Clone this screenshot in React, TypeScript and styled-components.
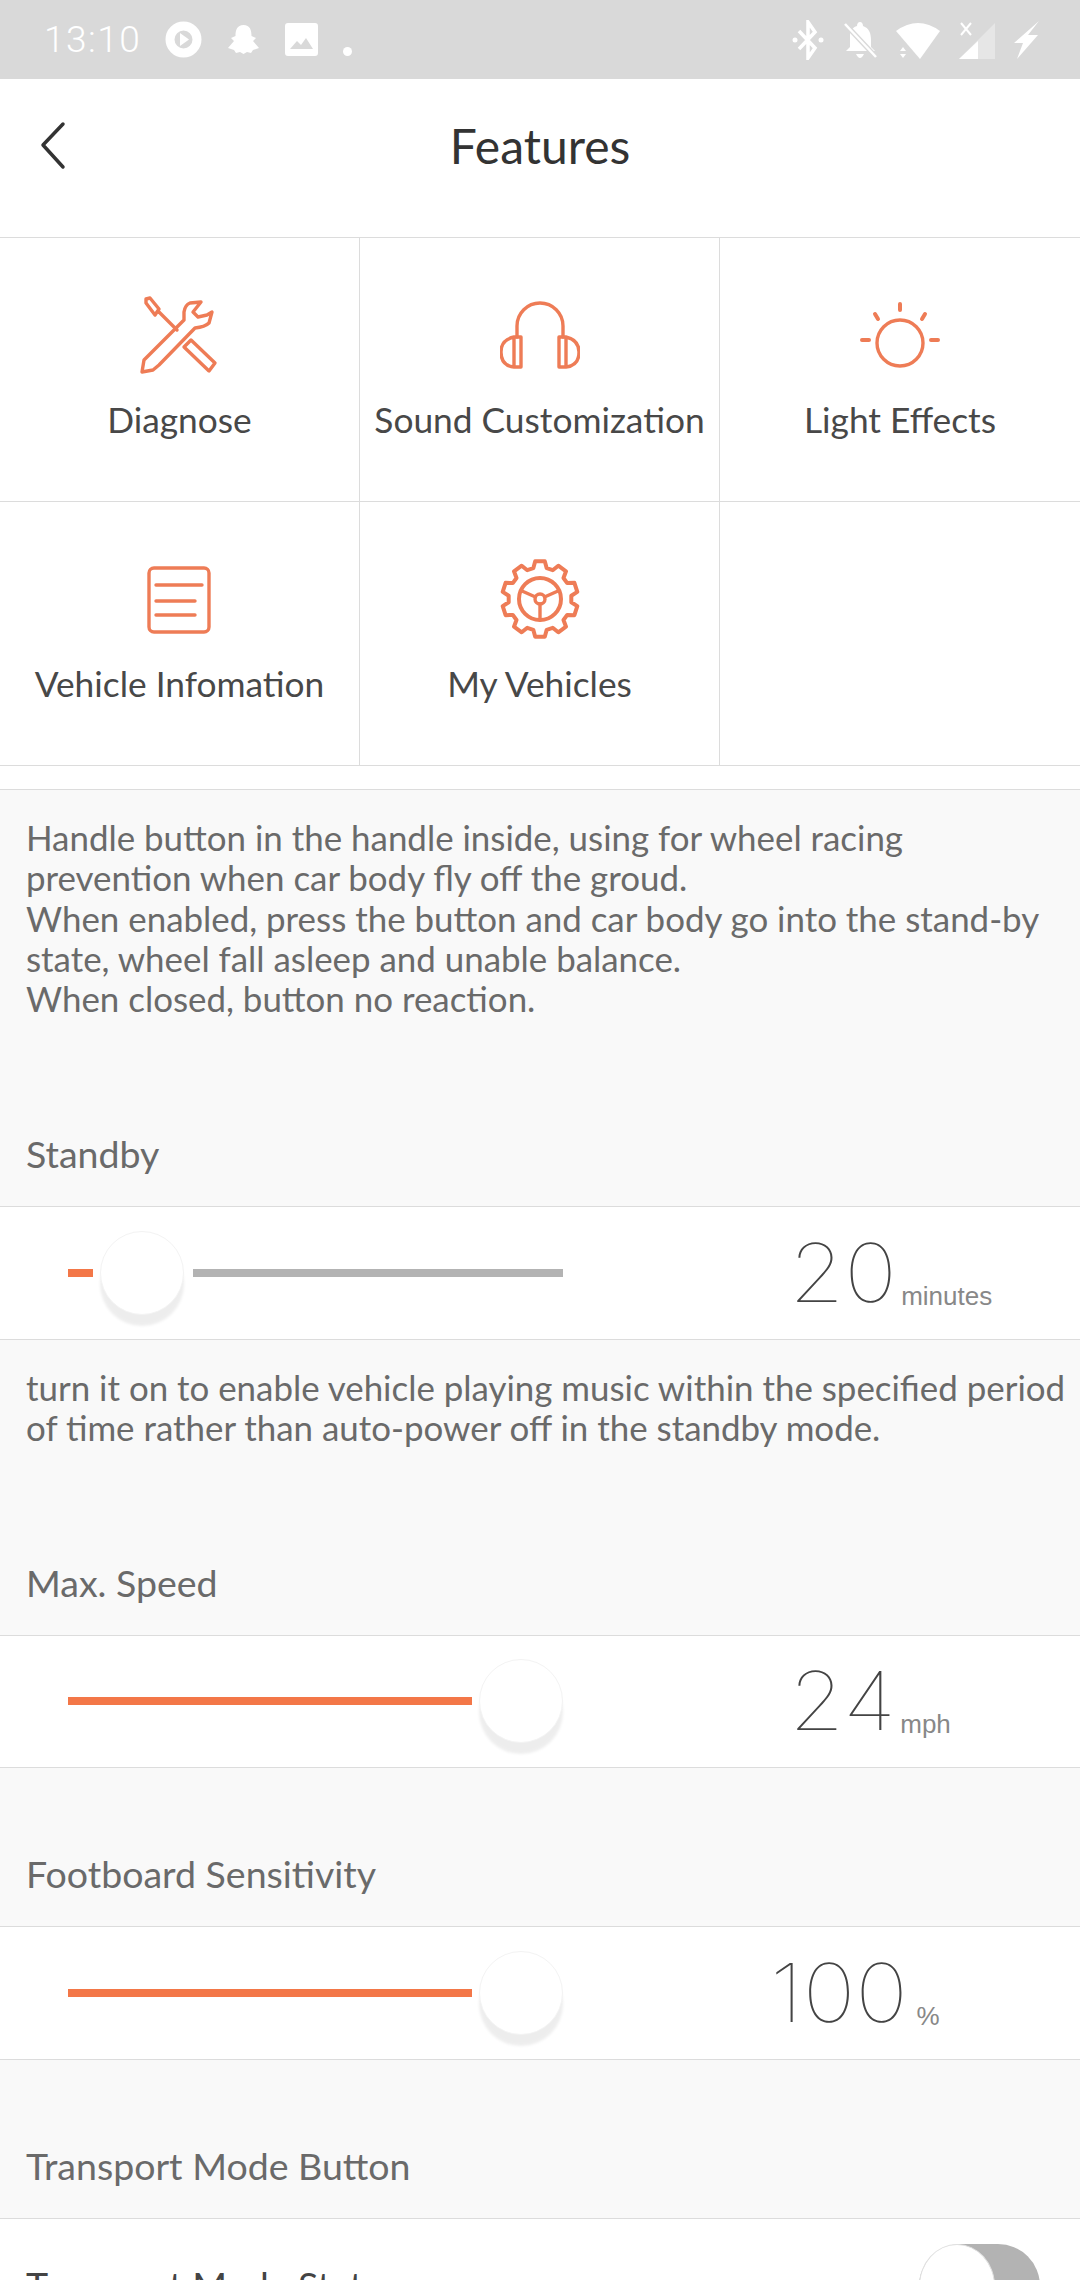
import React from 'react';
import styled, { createGlobalStyle } from 'styled-components';

const GlobalStyle = createGlobalStyle`
  html, body {
    margin: 0;
    padding: 0;
    height: 2280px;
    overflow: hidden;
    background: #f8f8f8;
  }
`;

const Page = styled.div`
  width: 1080px;
  height: 2280px;
  overflow: hidden;
  font-family: Lato, "Open Sans", sans-serif;
  background: #f9f9f9;
`;

const StatusBar = styled.div`
  height: 79px;
  background: #d9d9d9;
  display: flex;
  align-items: center;
  padding: 0 41px 0 44px;
  box-sizing: border-box;
  color: #fff;
`;

const Clock = styled.span`
  font-family: Roboto, sans-serif;
  font-size: 37px;
  font-weight: 300;
  width: 121px;
  letter-spacing: 1.5px;
`;

const StatusGroup = styled.div<{ $gap: number }>`
  display: flex;
  align-items: center;
  gap: ${(p) => p.$gap}px;
`;

const Spacer = styled.div`
  flex: 1;
`;

const Header = styled.div`
  height: 158px;
  background: #fff;
  display: flex;
  align-items: center;
  justify-content: center;
  position: relative;
  padding-bottom: 26px;
  box-sizing: border-box;
`;

const BackIcon = styled.svg`
  position: absolute;
  left: 38px;
  top: 42px;
`;

const Title = styled.h1`
  margin: 0;
  font-size: 48px;
  font-weight: 400;
  color: #333;
`;

const Grid = styled.div`
  display: grid;
  grid-template-columns: repeat(3, 360px);
  grid-auto-rows: 264px;
  background: #fff;
  border-top: 1px solid #dcdcdc;
`;

const Cell = styled.div`
  box-sizing: border-box;
  border-right: 1px solid #dcdcdc;
  border-bottom: 1px solid #dcdcdc;
  display: flex;
  flex-direction: column;
  align-items: center;
  padding-top: 57px;
  &:nth-child(3n) {
    border-right: none;
  }
`;

const CellLabel = styled.span`
  margin-top: 25px;
  font-size: 35.3px;
  line-height: 40px;
  color: #484848;
  white-space: nowrap;
`;

const Gap = styled.div`
  height: 23px;
  background: #fff;
  border-bottom: 1px solid #dcdcdc;
`;

const Section = styled.div<{ $height: number }>`
  height: ${(p) => p.$height}px;
  box-sizing: border-box;
  padding: 28px 10px 0 26px;
  display: flex;
  flex-direction: column;
  justify-content: space-between;
`;

const Description = styled.p`
  margin: 0;
  font-size: 34.9px;
  line-height: 40.3px;
  color: #6a6a6a;
  white-space: pre-line;
`;

const SectionLabel = styled.div`
  font-size: 37.5px;
  line-height: 44px;
  color: #6a6a6a;
  padding-bottom: 30px;
`;

const Row = styled.div`
  height: 133.5px;
  box-sizing: border-box;
  background: #fff;
  border-top: 1px solid #dcdcdc;
  border-bottom: 1px solid #dcdcdc;
  display: flex;
  align-items: center;
  padding-left: 68px;
`;

const Slider = styled.div`
  width: 495px;
  display: flex;
  align-items: center;
  gap: 7px;
`;

const Fill = styled.div<{ $width: number }>`
  width: ${(p) => p.$width}px;
  height: 8px;
  flex-shrink: 0;
  background: #f37748;
`;

const Rest = styled.div`
  flex: 1;
  height: 8px;
  background: #b3b3b3;
`;

const Thumb = styled.div`
  width: 84px;
  height: 84px;
  flex-shrink: 0;
  box-sizing: border-box;
  border-radius: 50%;
  background: #fff;
  border: 1px solid #f3f3f3;
  box-shadow: 0 11px 3px rgba(0, 0, 0, 0.07);
  margin-right: 2px;
`;

const Value = styled.div<{ $left: number }>`
  margin-left: ${(p) => p.$left}px;
  display: flex;
  align-items: baseline;
  color: #444;
`;

const Number = styled.span`
  display: inline-block;
  font-family: Inter, sans-serif;
  font-size: 81px;
  font-weight: 100;
  transform: scaleX(1.1);
  transform-origin: left center;
`;

const Unit = styled.span<{ $gap: number }>`
  font-family: "Liberation Sans", sans-serif;
  font-size: 26px;
  color: #888;
  margin-left: ${(p) => p.$gap}px;
  transform: translateY(3px);
`;

const SwitchRow = styled(Row)`
  justify-content: space-between;
  border-bottom: none;
  padding: 0 40px 0 26px;
`;

const SwitchLabel = styled.span`
  font-size: 37.5px;
  color: #444;
`;

const Toggle = styled.div`
  width: 121px;
  height: 84px;
  border-radius: 42px;
  background: #b3b3b3;
  margin-top: 3px;
`;

const ToggleKnob = styled.div`
  width: 76px;
  height: 84px;
  box-sizing: border-box;
  border-radius: 50%;
  background: #fff;
  border: 1px solid #e0e0e0;
`;

const Stroke = styled.svg.attrs({ fill: 'none', stroke: '#ee7c56', strokeLinecap: 'round', strokeLinejoin: 'round' })`
  display: block;
  flex-shrink: 0;
  stroke-width: 3.4;
`;

function gearPath(cx: number, cy: number, teeth: number, outer: number, inner: number) {
  const pts: string[] = [];
  const step = (Math.PI * 2) / teeth;
  for (let i = 0; i < teeth; i++) {
    const a = -Math.PI / 2 + i * step;
    const offs: [number, number][] = [
      [-0.34, inner],
      [-0.2, outer],
      [0.2, outer],
      [0.34, inner],
    ];
    offs.forEach(([o, r]) => {
      const x = cx + Math.cos(a + o * step) * r;
      const y = cy + Math.sin(a + o * step) * r;
      pts.push(`${x.toFixed(1)} ${y.toFixed(1)}`);
    });
  }
  return 'M' + pts.join(' L') + ' Z';
}

const DiagnoseIcon = () => (
  <Stroke width="80" height="80" viewBox="0 0 80 80">
    <path d="M44 25 L44 17 Q45 10 50 8 L61 7 L53 17 L58 22 L67 20 L72 17 L69 28 Q65 32 55 33 L19 70 L13 75 L2 77 L4 65 Z" />
    <path d="M6 4 L10 3 L19 14 L15 20 L6 8 Z" />
    <path d="M19 17 L37 35" />
    <path d="M44 52 L51 45 L75 68 L69 76 Z" />
  </Stroke>
);

const HeadphonesIcon = () => (
  <Stroke width="80" height="80" viewBox="0 0 80 80">
    <path d="M17 42 V31 A23 23 0 0 1 63 31 V42" />
    <path d="M21 42 H14 C5 44 1 50 1 57 C1 65 5 71 14 72 H21 Z M14 42 V72" />
    <path d="M59 42 H66 C75 44 79 50 79 57 C79 65 75 71 66 72 H59 Z M66 42 V72" />
  </Stroke>
);

const LightIcon = () => (
  <Stroke width="80" height="80" viewBox="0 0 80 80">
    <circle cx="40" cy="48" r="23" />
    <path d="M40 9 V15 M15 19 L18 24 M65 19 L62 24 M2 45 H9 M71 45 H78" strokeWidth="4" />
  </Stroke>
);

const InfoIcon = () => (
  <Stroke width="80" height="80" viewBox="0 0 80 80">
    <rect x="9" y="9" width="60" height="64" rx="5" />
    <path d="M16 26 H62 M16 42 H55 M16 56 H55" />
  </Stroke>
);

const GearIcon = () => (
  <Stroke width="80" height="80" viewBox="0 0 80 80" strokeWidth="4">
    <path d={gearPath(40, 40, 10, 38, 31.5)} style={{ strokeWidth: 4 }} />
    <circle cx="40" cy="40" r="21" style={{ strokeWidth: 4 }} />
    <circle cx="40" cy="40" r="5" />
    <path d="M40 45 V61 M35.5 38 L22 32 M44.5 38 L58 32" />
  </Stroke>
);

const StatusLeftIcons = () => (
  <StatusGroup $gap={25}>
    <svg width="37" height="37" viewBox="0 0 37 37">
      <circle cx="18.5" cy="18.5" r="13.5" fill="none" stroke="#fff" strokeWidth="9" />
      <path d="M15 12 L24 18.5 L15 25 Z" fill="#fff" />
    </svg>
    <svg width="33" height="31" viewBox="0 0 33 31">
      <path d="M16.5 1 C10 1 8.5 6 8.5 12 L4 14 L7 17 L1 24 L7 26 L9 29 L13 28 L16.5 30 L20 28 L24 29 L26 26 L32 24 L26 17 L29 14 L24.5 12 C24.5 6 23 1 16.5 1 Z" fill="#fff" />
    </svg>
    <svg width="33" height="33" viewBox="0 0 33 33">
      <path fillRule="evenodd" d="M3 0 H30 Q33 0 33 3 V30 Q33 33 30 33 H3 Q0 33 0 30 V3 Q0 0 3 0 Z M5 26 H28 L21 15 L16 22 L12 18 Z" fill="#fff" />
    </svg>
    <svg width="9" height="9" viewBox="0 0 9 9" style={{ marginTop: 24 }}>
      <circle cx="4.5" cy="4.5" r="4.5" fill="#fff" />
    </svg>
  </StatusGroup>
);

const StatusRightIcons = () => (
  <StatusGroup $gap={17}>
    <svg width="34" height="40" viewBox="0 0 34 40">
      <path d="M8 11 L24 28 L17 38 V2 L24 12 L8 29" fill="none" stroke="#fff" strokeWidth="3.5" />
      <circle cx="4" cy="20" r="2.5" fill="#fff" />
      <circle cx="30" cy="20" r="2.5" fill="#fff" />
    </svg>
    <svg width="36" height="38" viewBox="0 0 36 38">
      <path d="M18 1 C20 1 21 3 21 5 C27 7 29 12 29 19 V26 L33 30 H4 L8 26 V14 C8 10 11 6 15 5 C15 3 16 1 18 1 Z M14 33 H22 Q20 37 18 37 Q16 37 14 33 Z" fill="#fff" />
      <path d="M3 3 L34 36" stroke="#d9d9d9" strokeWidth="5" />
      <path d="M3 3 L34 36" stroke="#fff" strokeWidth="2.5" />
    </svg>
    <svg width="46" height="38" viewBox="0 0 46 38">
      <path d="M1 10 Q23 -6 45 10 L25 38 Z" fill="#fff" />
      <path d="M8 26 L11 30 H5 Z M8 37 L11 33 H5 Z" fill="#fff" />
    </svg>
    <svg width="38" height="38" viewBox="0 0 38 38">
      <path d="M37 2 V38 H1 Z" fill="#fff" opacity="0.35" />
      <path d="M20 20 V38 H1 Z" fill="#fff" />
      <path d="M3 2 L13 14 M13 2 L3 14" stroke="#fff" strokeWidth="2" />
    </svg>
    <svg width="26" height="38" viewBox="0 0 26 38">
      <path d="M26 0 L1 22 H10 L4 38 L25 14 H15 Z" fill="#fff" />
    </svg>
  </StatusGroup>
);

const features = [
  { label: 'Diagnose', icon: <DiagnoseIcon /> },
  { label: 'Sound Customization', icon: <HeadphonesIcon /> },
  { label: 'Light Effects', icon: <LightIcon /> },
  { label: 'Vehicle Infomation', icon: <InfoIcon /> },
  { label: 'My Vehicles', icon: <GearIcon /> },
];

interface SliderRowProps {
  fill: number;
  value: string;
  unit: string;
  left: number;
  unitGap: number;
}

const SliderRow: React.FC<SliderRowProps> = ({ fill, value, unit, left, unitGap }) => (
  <Row>
    <Slider>
      <Fill $width={fill} />
      <Thumb />
      {fill < 100 && <Rest />}
    </Slider>
    <Value $left={left}>
      <Number>{value}</Number>
      <Unit $gap={unitGap}>{unit}</Unit>
    </Value>
  </Row>
);

const App: React.FC = () => (
  <Page>
    <GlobalStyle />
    <StatusBar>
      <Clock>13:10</Clock>
      <StatusLeftIcons />
      <Spacer />
      <StatusRightIcons />
    </StatusBar>
    <Header>
      <BackIcon width="30" height="50" viewBox="0 0 30 50" fill="none" stroke="#333" strokeWidth="3.5" strokeLinecap="round" strokeLinejoin="round">
        <path d="M25 3 L5 24 L25 46" />
      </BackIcon>
      <Title>Features</Title>
    </Header>
    <Grid>
      {features.map((f) => (
        <Cell key={f.label}>
          {f.icon}
          <CellLabel>{f.label}</CellLabel>
        </Cell>
      ))}
      <Cell />
    </Grid>
    <Gap />
    <Section $height={416}>
      <Description>
        {'Handle button in the handle inside, using for wheel racing\nprevention when car body fly off the groud.\nWhen enabled, press the button and car body go into the stand-by\nstate, wheel fall asleep and unable balance.\nWhen closed, button no reaction.'}
      </Description>
      <SectionLabel>Standby</SectionLabel>
    </Section>
    <SliderRow fill={25} value="20" unit="minutes" left={226} unitGap={14} />
    <Section $height={295}>
      <Description>
        {'turn it on to enable vehicle playing music within the specified period\nof time rather than auto-power off in the standby mode.'}
      </Description>
      <SectionLabel>Max. Speed</SectionLabel>
    </Section>
    <SliderRow fill={404} value="24" unit="mph" left={226} unitGap={14} />
    <Section $height={158}>
      <span />
      <SectionLabel>Footboard Sensitivity</SectionLabel>
    </Section>
    <SliderRow fill={404} value="100" unit="%" left={207} unitGap={21} />
    <Section $height={158}>
      <span />
      <SectionLabel>Transport Mode Button</SectionLabel>
    </Section>
    <SwitchRow>
      <SwitchLabel>Transport Mode Status</SwitchLabel>
      <Toggle>
        <ToggleKnob />
      </Toggle>
    </SwitchRow>
  </Page>
);

export default App;
